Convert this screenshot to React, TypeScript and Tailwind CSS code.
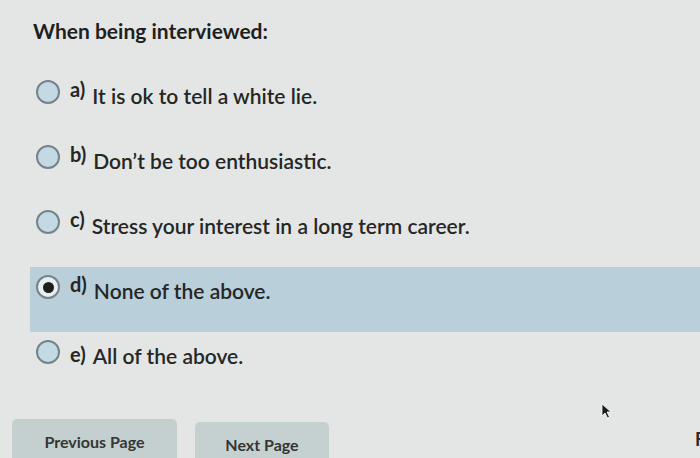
import React from "react";

const options = [
  { key: "a)", text: "It is ok to tell a white lie.", selected: false, raised: true },
  { key: "b)", text: "Don\u2019t be too enthusiastic.", selected: false, raised: true },
  { key: "c)", text: "Stress your interest in a long term career.", selected: false, raised: true },
  { key: "d)", text: "None of the above.", selected: true, raised: true },
  { key: "e)", text: "All of the above.", selected: false, raised: false },
];

export default function App() {
  return (
    <div className="relative w-[700px] h-[458px] overflow-hidden bg-[#e3e6e4] font-['Lato','Noto_Sans',sans-serif] text-[#262626]">
      <div className="flex flex-col">
        <h1 className="pl-[33px] pt-[17px] h-[72px] text-[21px] font-bold leading-[28px] text-[#1f1f1f]">
          When being interviewed:
        </h1>
        <div className="flex flex-col pl-[30px]">
          {options.map((o) => (
            <div
              key={o.key}
              className={
                "flex items-start h-[65px] pl-[6px] pt-[8px] " +
                (o.selected ? "bg-[#b9cfd9]" : "")
              }
            >
              <div
                className={
                  "w-[24px] h-[24px] rounded-full border-2 border-[#75838a] flex items-center justify-center shrink-0 " +
                  (o.selected ? "bg-[#e9eeef]" : "bg-[#c3d9e4]")
                }
              >
                {o.selected && <div className="w-[11px] h-[11px] rounded-full bg-[#1e1e1e]" />}
              </div>
              <span
                className={
                  "ml-[10px] text-[20px] font-bold leading-[24px] " +
                  (o.raised ? "mt-[-3px]" : "mt-[2px]")
                }
              >
                {o.key}
              </span>
              <span className="ml-[7px] mt-[3px] text-[21px] font-semibold leading-[26px]">{o.text}</span>
            </div>
          ))}
        </div>
        <div className="flex gap-[18px] pl-[12px] mt-[22px] items-start">
          <button className="w-[165px] h-[46px] rounded-t-[5px] bg-[#c4d0cf] text-[16px] font-bold text-[#353535]">
            Previous Page
          </button>
          <button className="w-[134px] h-[46px] mt-[3px] rounded-t-[5px] bg-[#c5d1d1] text-[16px] font-bold text-[#353535]">
            Next Page
          </button>
        </div>
      </div>
      <svg className="absolute left-[601px] top-[403px]" width="12" height="16" viewBox="0 0 12 16">
        <path d="M1 1 L1 13 L4 10 L6.5 15 L8.5 14 L6 9 L10 9 Z" fill="#1a1a1a" stroke="#ffffff" strokeWidth="0.8" />
      </svg>
      <span className="absolute left-[695px] top-[430px] text-[18px] font-bold text-[#2a2a2a] leading-none">F</span>
    </div>
  );
}
